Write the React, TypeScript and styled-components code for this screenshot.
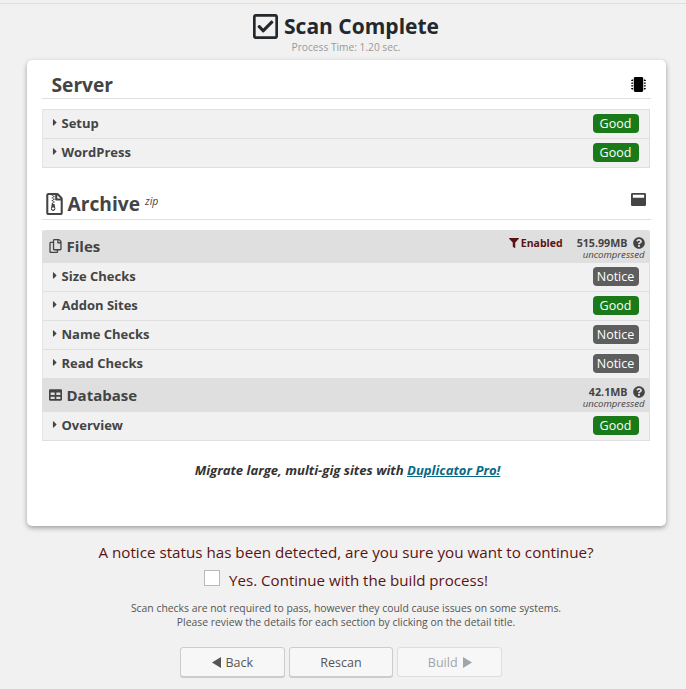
import React from "react";
import styled, { createGlobalStyle } from "styled-components";
import {
  FaRegCheckSquare, FaMicrochip, FaRegFileArchive, FaRegCopy, FaTable, FaFilter,
  FaQuestionCircle, FaWindowMaximize, FaCaretRight,
} from "react-icons/fa";

const Global = createGlobalStyle`
  html, body { margin: 0; padding: 0; background: #f1f1f1; }
  body { font-family: "Open Sans", "Liberation Sans", sans-serif; color: #444; }
  #root { width: 686px; height: 689px; overflow: hidden; }
`;

const Page = styled.div`
  box-sizing: border-box;
  height: 686px;
  border-top: 1px solid #dedede;
  margin-top: 3px;
  padding-left: 6px;
  display: flex;
  flex-direction: column;
  align-items: center;
`;
const Title = styled.h1`
  margin: 7px 0 0;
  display: flex;
  align-items: center;
  gap: 6px;
  height: 30px;
  font-size: 21px;
  line-height: 30px;
  font-weight: 700;
  color: #23282d;
  svg { width: 25px; height: 29px; }
`;
const ProcessTime = styled.div`
  font-size: 10.2px;
  line-height: 12px;
  color: #999;
`;
const Card = styled.section`
  box-sizing: border-box;
  width: 639px;
  height: 466px;
  margin: 7px 0 0;
  padding: 0 15px;
  background: #fff;
  border-radius: 5px;
  box-shadow: 0 2px 5px rgba(0, 0, 0, 0.35);
`;
const Heading = styled.div<{ $h: number }>`
  display: flex;
  align-items: flex-end;
  height: ${(p) => p.$h}px;
  border-bottom: 1px solid #dfdfdf;
  position: relative;
`;
const HeadText = styled.h2<{ $pad: number; $lift: number }>`
  margin: 0 0 ${(p) => p.$lift}px;
  padding-left: ${(p) => p.$pad}px;
  display: flex;
  align-items: center;
  font-size: 19.2px;
  line-height: 30px;
  font-weight: 700;
  color: #444;
  sup { font-size: 10.5px; font-weight: 400; font-style: italic; margin: -7px 0 0 5px; line-height: 12px; color: #444; }
`;
const ArchiveGlyph = styled(FaRegFileArchive)`
  width: 17px;
  height: 22px;
  margin-right: 5px;
`;
const HeadIcon = styled.span<{ $color: string; $bottom: number; $size: number }>`
  position: absolute;
  right: 5px;
  bottom: ${(p) => p.$bottom}px;
  display: flex;
  color: ${(p) => p.$color};
  svg { width: ${(p) => p.$size}px; height: ${(p) => p.$size}px; }
`;
const Panel = styled.div<{ $top: number }>`
  margin-top: ${(p) => p.$top}px;
  width: 608px;
  box-sizing: border-box;
  border-right: 1px solid #dfdfdf;
  border-left: 1px solid #e6e6e6;
  border-bottom: 1px solid #dfdfdf;
`;
const TopRule = styled.div`
  border-top: 1px solid #e0e0e0;
`;
const Row = styled.div`
  box-sizing: border-box;
  height: 29px;
  display: flex;
  align-items: center;
  justify-content: space-between;
  padding: 0 10px 0 9px;
  background: #f1f1f1;
  border-bottom: 1px solid #dfdfdf;
  &:last-child { border-bottom: 0; height: 28px; }
`;
const RowLabel = styled.div`
  display: flex;
  align-items: center;
  margin-top: -2px;
  font-size: 13px;
  font-weight: 700;
  color: #444;
  svg { width: 6px; height: 11px; margin-right: 4px; margin-top: -1px; }
`;
const Badge = styled.span<{ $kind: "good" | "notice" }>`
  box-sizing: border-box;
  width: 46px;
  height: 19px;
  margin-top: -2px;
  border-radius: 4px;
  background: ${(p) => (p.$kind === "good" ? "#1a7a1a" : "#5e5e5e")};
  color: #fff;
  font-size: 12.5px;
  line-height: 19px;
  text-align: center;
`;
const Group = styled.div<{ $h: number; $round?: boolean }>`
  box-sizing: border-box;
  height: ${(p) => p.$h}px;
  display: flex;
  align-items: center;
  justify-content: space-between;
  padding: 0 5px 0 7px;
  background: #dfdfdf;
  border-radius: ${(p) => (p.$round ? "4px 4px 0 0" : "0")};
  margin: 0 -1px 0 -1px;
`;
const GroupTitle = styled.div`
  display: flex;
  align-items: center;
  gap: 5px;
  margin-top: -2px;
  font-size: 15px;
  font-weight: 700;
  color: #444;
  svg { width: 13px; height: 14px; }
`;
const Meta = styled.div`
  display: flex;
  align-items: flex-start;
  gap: 14px;
  padding-top: 2px;
`;
const FilterNote = styled.div`
  display: flex;
  align-items: center;
  gap: 2px;
  font-size: 10.5px;
  line-height: 14px;
  font-weight: 700;
  color: #5b1313;
  svg { width: 10px; height: 10px; }
`;
const Size = styled.div`
  text-align: right;
  font-size: 10.7px;
  line-height: 14px;
  font-weight: 700;
  color: #444;
  svg { width: 12px; height: 12px; margin-left: 5px; vertical-align: -2px; }
  em { display: block; font-size: 9.6px; line-height: 10px; font-weight: 400; font-style: italic; }
`;
const Promo = styled.div`
  margin-top: 20px;
  padding-left: 3px;
  text-align: center;
  font-size: 13.1px;
  line-height: 18px;
  font-weight: 700;
  font-style: italic;
  color: #333;
  a { color: #0a6a86; text-decoration: underline; }
`;
const Confirm = styled.div`
  margin-top: 16px;
  font-size: 15.2px;
  line-height: 20px;
  color: #5b1313;
  text-align: center;
`;
const CheckLine = styled.label`
  margin-top: 8px;
  display: flex;
  align-items: center;
  gap: 9px;
  font-size: 15.1px;
  line-height: 20px;
  color: #5b1313;
`;
const Box = styled.span`
  box-sizing: border-box;
  width: 16px;
  height: 16px;
  margin-top: -5px;
  background: #fff;
  border: 1px solid #b4b9be;
`;
const Hint = styled.p`
  margin: 11px 0 0;
  font-size: 10.4px;
  line-height: 14px;
  color: #555;
  text-align: center;
`;
const Buttons = styled.div`
  margin: 18px 10px 0 0;
  display: flex;
  gap: 4px;
`;
const Button = styled.button<{ $disabled?: boolean }>`
  box-sizing: border-box;
  width: 104.7px;
  height: 30px;
  padding: 0;
  font-family: inherit;
  font-size: 12.5px;
  color: ${(p) => (p.$disabled ? "#a0a5aa" : "#555")};
  background: #f7f7f7;
  border: 1px solid ${(p) => (p.$disabled ? "#ddd" : "#ccc")};
  border-radius: 3px;
  box-shadow: ${(p) => (p.$disabled ? "none" : "0 1px 0 #ccc")};
  display: flex;
  align-items: center;
  justify-content: center;
  gap: 5px;
`;
const Arrow = styled.svg`
  width: 9px;
  height: 11px;
  fill: currentColor;
`;

const Check = ({ label, kind }: { label: string; kind: "good" | "notice" }) => (
  <Row>
    <RowLabel><FaCaretRight />{label}</RowLabel>
    <Badge $kind={kind}>{kind === "good" ? "Good" : "Notice"}</Badge>
  </Row>
);

export default function App() {
  return (
    <Page>
      <Global />
      <Title><FaRegCheckSquare />Scan Complete</Title>
      <ProcessTime>Process Time: 1.20 sec.</ProcessTime>
      <Card>
        <Heading $h={38}>
          <HeadText $pad={10} $lift={-2}>Server</HeadText>
          <HeadIcon $color="#000" $bottom={6} $size={15}><FaMicrochip /></HeadIcon>
        </Heading>
        <Panel $top={10}>
          <TopRule />
          <Check label="Setup" kind="good" />
          <Check label="WordPress" kind="good" />
        </Panel>
        <Heading $h={51}>
          <HeadText $pad={4} $lift={0}><ArchiveGlyph />Archive<sup>zip</sup></HeadText>
          <HeadIcon $color="#444" $bottom={12} $size={15}><FaWindowMaximize /></HeadIcon>
        </Heading>
        <Panel $top={10}>
          <Group $h={33} $round>
            <GroupTitle><FaRegCopy />Files</GroupTitle>
            <Meta>
              <FilterNote><FaFilter />Enabled</FilterNote>
              <Size>515.99MB<FaQuestionCircle /><em>uncompressed</em></Size>
            </Meta>
          </Group>
          <Check label="Size Checks" kind="notice" />
          <Check label="Addon Sites" kind="good" />
          <Check label="Name Checks" kind="notice" />
          <Check label="Read Checks" kind="notice" />
          <Group $h={33}>
            <GroupTitle><FaTable />Database</GroupTitle>
            <Meta>
              <Size>42.1MB<FaQuestionCircle /><em>uncompressed</em></Size>
            </Meta>
          </Group>
          <Check label="Overview" kind="good" />
        </Panel>
        <Promo>Migrate large, multi-gig sites with <a href="#pro">Duplicator Pro!</a></Promo>
      </Card>
      <Confirm>A notice status has been detected, are you sure you want to continue?</Confirm>
      <CheckLine><Box />Yes. Continue with the build process!</CheckLine>
      <Hint>
        Scan checks are not required to pass, however they could cause issues on some systems.<br />
        Please review the details for each section by clicking on the detail title.
      </Hint>
      <Buttons>
        <Button><Arrow viewBox="0 0 9 11"><path d="M9 0v11L0 5.500z" /></Arrow>Back</Button>
        <Button>Rescan</Button>
        <Button $disabled>Build<Arrow viewBox="0 0 9 11"><path d="M0 0v11l9-5.500z" /></Arrow></Button>
      </Buttons>
    </Page>
  );
}
